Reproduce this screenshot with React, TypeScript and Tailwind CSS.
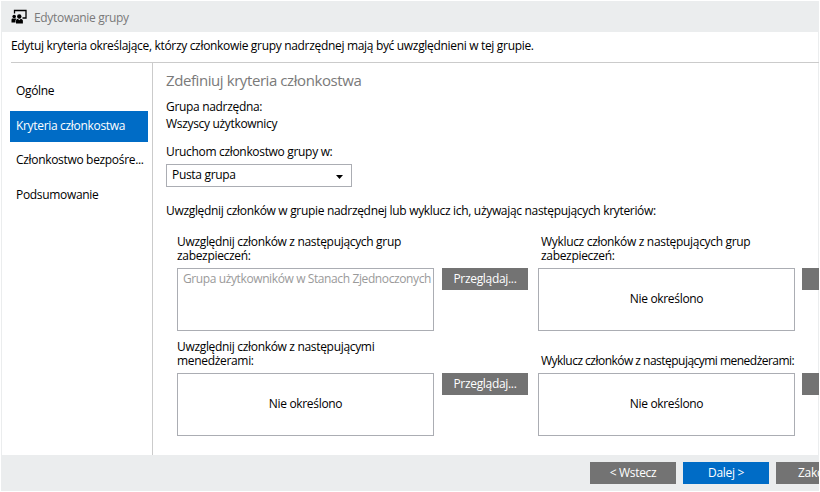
import React from "react";

const steps = ["Ogólne", "Kryteria członkostwa", "Członkostwo bezpośre...", "Podsumowanie"];

function GroupIcon() {
  return (
    <svg width="16" height="15" viewBox="0 0 16 15" className="shrink-0">
      <path d="M3.500 4.500V1.500h11.500v7.500h-3.500" fill="none" stroke="#000" strokeWidth="1.300" />
      <circle cx="3.200" cy="7.500" r="1.800" />
      <circle cx="8.300" cy="7.500" r="2.200" />
      <path d="M0.500 13.500V11C0.500 10 1 9.600 2 9.600h2.400c.4 0 .8.1 1.100.4-.8.5-1 1.100-1 1.900v1.600z" />
      <path d="M5 14.500v-2.800C5 10.500 5.900 10 7 10l1.300 1.300L9.600 10c1.200 0 2.300.5 2.300 1.700v2.800z" />
    </svg>
  );
}

function Criteria({ label, value, browse }: { label: React.ReactNode; value?: string; browse?: string }) {
  return (
    <div className="w-[361px] shrink-0">
      <div className={browse ? "flex h-[33px] flex-col justify-end pb-[5px] leading-[14px]" : "flex h-[33px] flex-col justify-end pb-[5px] pl-[3px] leading-[14px]"}>
        {label}
      </div>
      <div className={browse ? "flex h-[63px] gap-[8px]" : "flex h-[63px] gap-[7px]"}>
        {value ? (
          <div className="w-[257px] shrink-0 border border-[#abadb3] pt-[2px] pl-[5px] leading-[16px] tracking-[-0.39px] text-[#9a9a9a]">
            {value}
          </div>
        ) : (
          <div className="flex w-[257px] shrink-0 items-center justify-center border border-[#abadb3] pb-[2px]">Nie określono</div>
        )}
        <button className="flex h-[22px] w-[86px] shrink-0 items-center justify-center bg-[#737373] text-white">
          {browse}
        </button>
      </div>
    </div>
  );
}

export default function App() {
  return (
    <div className="h-[492px] w-[820px] overflow-hidden bg-white pt-px pl-px font-['Open_Sans','Noto_Sans',sans-serif] text-[12px] tracking-[-0.32px] whitespace-nowrap text-black">
      <div className="flex h-[490px] w-[818px] flex-col overflow-hidden border-l border-[#ebedee] shadow-[inset_-1px_0_#ebedee]">
        <header className="flex h-[31px] shrink-0 items-center gap-[7px] bg-[#ebedee] pl-[9px] text-[#7a7a7a]">
          <GroupIcon />
          <h1 className="pt-[2px]">Edytowanie grupy</h1>
        </header>
        <p className="ml-[9px] h-[31px] shrink-0 border-b border-[#cbcbcb] pt-[5px] leading-[18px]">
          Edytuj kryteria określające, którzy członkowie grupy nadrzędnej mają być uwzględnieni w tej grupie.
        </p>
        <div className="flex min-h-0 flex-1">
          <nav className="flex w-[151px] shrink-0 flex-col gap-[3.5px] border-r border-[#cbcbcb] pt-[13.5px] pl-[8px]">
            {steps.map((s, i) => (
              <div
                key={s}
                className={
                  i === 1
                    ? "flex h-[31px] w-[138px] shrink-0 items-center bg-[#006cc6] pb-[2px] pl-[6px] text-white"
                    : "flex h-[31px] w-[138px] shrink-0 items-center pb-[2px] pl-[6px]"
                }
              >
                {s}
              </div>
            ))}
          </nav>
          <main className="min-w-0 flex-1 overflow-hidden pl-[13px]">
            <h2 className="pt-[7px] text-[15px] leading-[20px] tracking-[-0.42px] text-[#7a7a7a]">Zdefiniuj kryteria członkostwa</h2>
            <div className="pt-[8px] leading-[17px]">
              <p>Grupa nadrzędna:</p>
              <p>Wszyscy użytkownicy</p>
            </div>
            <p className="pt-[11px] leading-[17px]">Uruchom członkostwo grupy w:</p>
            <div className="mt-[4px] flex h-[23px] w-[186px] items-center justify-between border border-[#abadb3] pr-[8px] pl-[5px]">
              <span className="pb-[2px]">Pusta grupa</span>
              <svg width="7" height="4" viewBox="0 0 7 4" className="mt-[2px]">
                <path d="M0 0h7L3.500 4z" />
              </svg>
            </div>
            <p className="pt-[15px] leading-[18px]">
              Uwzględnij członków w grupie nadrzędnej lub wyklucz ich, używając następujących kryteriów:
            </p>
            <div className="flex pt-[15px] pl-[11px]">
              <Criteria
                label={<>Uwzględnij członków z następujących grup<br />zabezpieczeń:</>}
                value="Grupa użytkowników w Stanach Zjednoczonych"
                browse="Przeglądaj..."
              />
              <Criteria label={<>Wyklucz członków z następujących grup<br />zabezpieczeń:</>} />
            </div>
            <div className="flex pt-[9px] pl-[11px]">
              <Criteria label={<>Uwzględnij członków z następującymi<br />menedżerami:</>} browse="Przeglądaj..." />
              <Criteria label={<span className="tracking-[-0.52px]">Wyklucz członków z następującymi menedżerami:</span>} />
            </div>
          </main>
        </div>
        <footer className="flex h-[36px] shrink-0 gap-[7px] bg-[#ebedee] pt-[7px] pl-[588px] text-white">
          <button className="h-[22px] w-[86px] shrink-0 bg-[#737373]">&lt; Wstecz</button>
          <button className="h-[22px] w-[86px] shrink-0 bg-[#006cc6]">Dalej &gt;</button>
          <button className="h-[22px] w-[86px] shrink-0 bg-[#737373] pl-[22px] text-left">Zako</button>
        </footer>
      </div>
    </div>
  );
}
